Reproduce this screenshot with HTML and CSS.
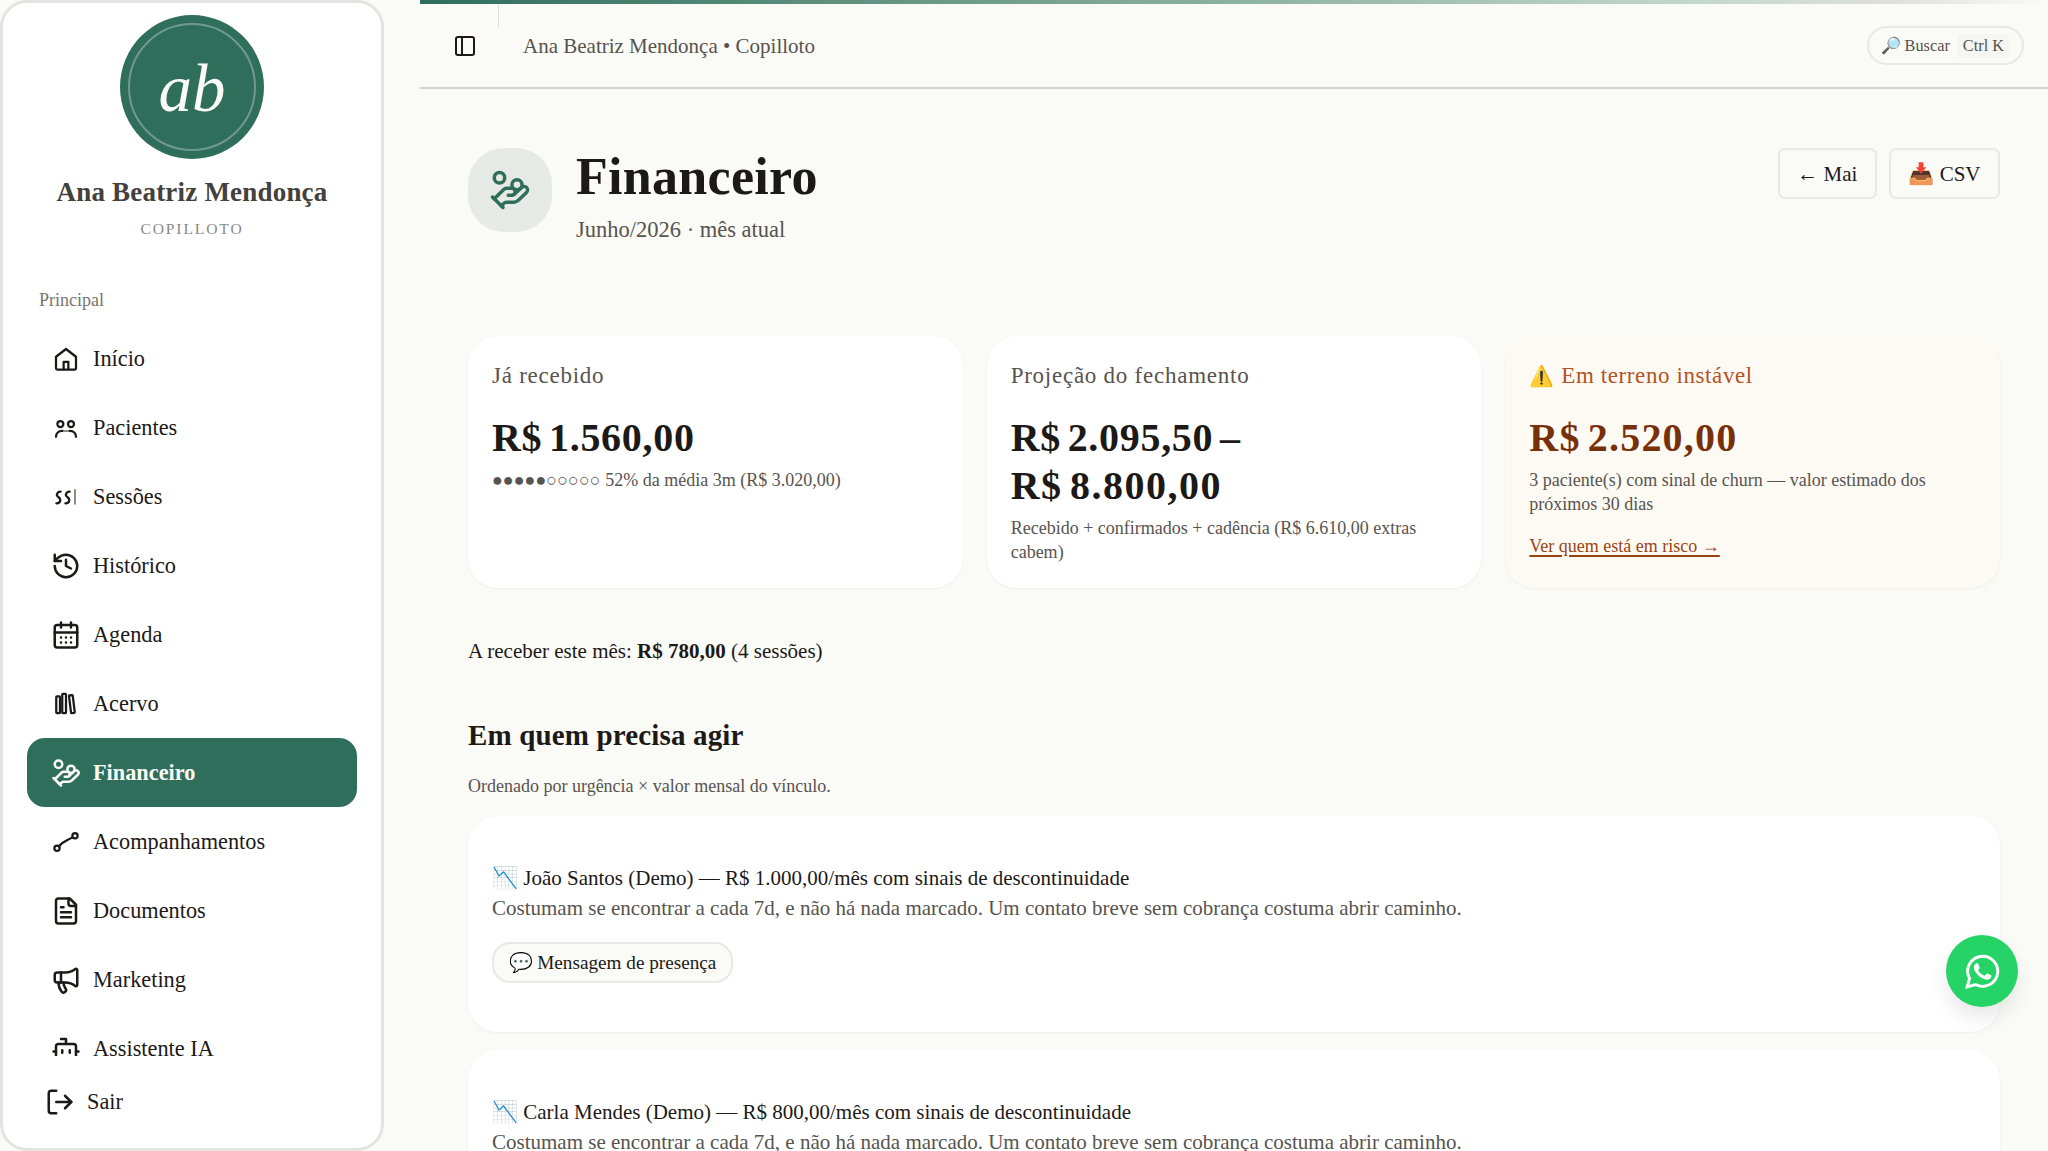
FILE: index.html
```
<!DOCTYPE html>
<html lang="pt-BR">
<head>
	<meta charset="utf-8">
	<title>Financeiro</title>
	<link rel="stylesheet" href="styles.css">
</head>
<body>
	<aside class="sidebar">
		<div class="logo"><div class="logo-ring">ab</div></div>
		<div class="brand">Ana Beatriz Mendonça</div>
		<div class="brand-sub">COPILLOTO</div>

		<div class="group-label">Principal</div>
		<nav class="nav">
			<a class="nav-item">
				<svg class="icon thin" viewBox="0 0 24 24"><path d="M4 10.2 12 4l8 6.2v9.2a1 1 0 0 1-1 1H5a1 1 0 0 1-1-1z"/><path d="M10.1 20.2v-6h3.8v6"/></svg>
				Início
			</a>
			<a class="nav-item">
				<svg class="icon thin" viewBox="0 0 24 24"><circle cx="7.5" cy="8.8" r="2.4"/><circle cx="16" cy="8.8" r="2.4"/><path d="M4 19c0-2.700 2-4.600 5-4.700M20 19c0-2.700-2-4.600-5-4.700"/><path class="faded" d="M9 14.300h6"/></svg>
				Pacientes
			</a>
			<a class="nav-item">
				<svg class="icon thin" viewBox="0 0 24 24"><path d="M7.700 7.700C5 7.700 3.800 10.200 5.600 11.800 7.800 13.100 8.600 17 4.300 17"/><path d="M14.900 7.700c-2.700 0-3.900 2.500-2.100 4.100 2.200 1.300 3 5.200-1.300 5.200"/><path class="faded" d="M19.200 6.300v11"/></svg>
				Sessões
			</a>
			<a class="nav-item">
				<svg class="icon" viewBox="0 0 24 24"><path d="M3 12a9 9 0 1 0 9-9 9.750 9.750 0 0 0-6.740 2.740L3 8"/><path d="M3 3v5h5"/><path d="M12 7v5l4 2"/></svg>
				Histórico
			</a>
			<a class="nav-item">
				<svg class="icon" viewBox="0 0 24 24"><path d="M8 2v4M16 2v4"/><rect x="3" y="4" width="18" height="18" rx="2"/><path d="M3 10h18"/><path d="M8 14h.01M12 14h.01M16 14h.01M8 18h.01M12 18h.01M16 18h.01"/></svg>
				Agenda
			</a>
			<a class="nav-item">
				<svg class="icon thin" viewBox="0 0 24 24"><rect x="4.200" y="5.800" width="3" height="13.400" rx=".5"/><rect x="9" y="3.800" width="3" height="15.400" rx=".5"/><rect x="15.200" y="5" width="3" height="14.200" rx=".5" transform="rotate(-7 16.700 12)"/></svg>
				Acervo
			</a>
			<a class="nav-item active">
				<svg class="icon" viewBox="0 0 24 24"><path d="M11 15h2a2 2 0 1 0 0-4h-3c-.6 0-1.100.2-1.400.6L3 17"/><path d="m7 21 1.600-1.400c.3-.4.8-.6 1.400-.6h4c1.100 0 2.100-.4 2.800-1.200l4.600-4.400a2 2 0 0 0-2.750-2.910l-4.200 3.900"/><path d="m2 16 6 6"/><circle cx="16" cy="9" r="2.900"/><circle cx="6" cy="5" r="3"/></svg>
				Financeiro
			</a>
			<a class="nav-item">
				<svg class="icon thin" viewBox="0 0 24 24"><circle cx="4.800" cy="16.900" r="2.100"/><circle cx="19.200" cy="6.900" r="2.100"/><path d="M6.400 15.400C9.500 11.400 13.500 10.600 17.300 8.100"/></svg>
				Acompanhamentos
			</a>
			<a class="nav-item">
				<svg class="icon" viewBox="0 0 24 24"><path d="M15 2H6a2 2 0 0 0-2 2v16a2 2 0 0 0 2 2h12a2 2 0 0 0 2-2V7Z"/><path d="M14 2v4a2 2 0 0 0 2 2h4"/><path d="M10 9H8M16 13H8M16 17H8"/></svg>
				Documentos
			</a>
			<a class="nav-item">
				<svg class="icon" viewBox="0 0 24 24"><path d="M11 6a13 13 0 0 0 8.400-2.800A1 1 0 0 1 21 4v12a1 1 0 0 1-1.600.8A13 13 0 0 0 11 14H5a2 2 0 0 1-2-2V8a2 2 0 0 1 2-2z"/><path d="M6 14a12 12 0 0 0 2.400 7.200 2 2 0 0 0 3.200-2.400A8 8 0 0 1 10 14"/><path d="M8 6v8"/></svg>
				Marketing
			</a>
			<a class="nav-item">
				<svg class="icon" viewBox="0 0 24 24"><path d="M12 8V4H8"/><rect x="4" y="8" width="16" height="12" rx="2"/><path d="M2 14h2M20 14h2M15 13v2M9 13v2"/></svg>
				Assistente IA
			</a>
		</nav>
		<a class="logout">
			<svg class="icon" viewBox="0 0 24 24"><path d="M9 21H5a2 2 0 0 1-2-2V5a2 2 0 0 1 2-2h4"/><path d="m16 17 5-5-5-5"/><path d="M21 12H9"/></svg>
			Sair
		</a>
	</aside>

	<main class="main">
		<div class="topbar-line"></div>
		<header class="topbar">
			<svg class="icon toggle" viewBox="0 0 24 24"><rect x="3" y="3" width="18" height="18" rx="2"/><path d="M9 3v18"/></svg>
			<span class="separator"></span>
			<span class="crumb">Ana Beatriz Mendonça • Copilloto</span>
			<button class="search">🔎 Buscar <kbd>Ctrl K</kbd></button>
		</header>

		<div class="content">
			<section class="hero">
				<div class="hero-icon">
					<svg class="icon" viewBox="0 0 24 24"><path d="M11 15h2a2 2 0 1 0 0-4h-3c-.6 0-1.100.2-1.400.6L3 17"/><path d="m7 21 1.600-1.400c.3-.4.8-.6 1.400-.6h4c1.100 0 2.100-.4 2.800-1.200l4.600-4.400a2 2 0 0 0-2.750-2.910l-4.200 3.900"/><path d="m2 16 6 6"/><circle cx="16" cy="9" r="2.900"/><circle cx="6" cy="5" r="3"/></svg>
				</div>
				<div class="hero-text">
					<h1>Financeiro</h1>
					<p>Junho/2026 · mês atual</p>
				</div>
				<div class="actions">
					<a class="btn">← Mai</a>
					<a class="btn">📥 CSV</a>
				</div>
			</section>

			<section class="cards">
				<div class="card">
					<h3>Já recebido</h3>
					<div class="value">R$ 1.560,00</div>
					<p class="note">●●●●●○○○○○ 52% da média 3m (R$ 3.020,00)</p>
				</div>
				<div class="card">
					<h3>Projeção do fechamento</h3>
					<div class="value">R$ 2.095,50 –<br><span class="upper">R$ 8.800,00</span></div>
					<p class="note">Recebido + confirmados + cadência (R$ 6.610,00 extras cabem)</p>
				</div>
				<div class="card warn">
					<h3><span class="alert">⚠️</span> Em terreno instável</h3>
					<div class="value">R$ 2.520,00</div>
					<p class="note">3 paciente(s) com sinal de churn — valor estimado dos próximos 30 dias</p>
					<a class="risk">Ver quem está em risco →</a>
				</div>
			</section>

			<p class="due">A receber este mês: <b>R$ 780,00</b> (4 sessões)</p>

			<h2>Em quem precisa agir</h2>
			<p class="hint">Ordenado por urgência × valor mensal do vínculo.</p>

			<div class="person">
				<div>📉 João Santos (Demo) — R$ 1.000,00/mês com sinais de descontinuidade</div>
				<div class="muted">Costumam se encontrar a cada 7d, e não há nada marcado. Um contato breve sem cobrança costuma abrir caminho.</div>
				<button class="message">💬 Mensagem de presença</button>
			</div>
			<div class="person">
				<div>📉 Carla Mendes (Demo) — R$ 800,00/mês com sinais de descontinuidade</div>
				<div class="muted">Costumam se encontrar a cada 7d, e não há nada marcado. Um contato breve sem cobrança costuma abrir caminho.</div>
			</div>
		</div>
	</main>

	<a class="whatsapp">
		<svg viewBox="0 0 24 24"><path d="M17.472 14.382c-.297-.149-1.758-.867-2.030-.967-.273-.099-.471-.148-.670.150-.197.297-.767.966-.940 1.164-.173.199-.347.223-.644.075-.297-.150-1.255-.463-2.390-1.475-.883-.788-1.480-1.761-1.653-2.059-.173-.297-.018-.458.130-.606.134-.133.298-.347.446-.520.149-.174.198-.298.298-.497.099-.198.050-.371-.025-.520-.075-.149-.669-1.612-.916-2.207-.242-.579-.487-.500-.669-.510-.173-.008-.371-.010-.570-.010-.198 0-.520.074-.792.372-.272.297-1.040 1.016-1.040 2.479 0 1.462 1.065 2.875 1.213 3.074.149.198 2.096 3.200 5.077 4.487.709.306 1.262.489 1.694.625.712.227 1.360.195 1.871.118.571-.085 1.758-.719 2.006-1.413.248-.694.248-1.289.173-1.413-.074-.124-.272-.198-.570-.347"/><path class="ring" d="M1.500 22.500l1.600-5.700A10.300 10.300 0 1 1 7.200 20.900z"/></svg>
	</a>
</body>
</html>
```
FILE: styles.css
```
* {
	box-sizing: border-box;
}

body {
	margin: 0;
	height: 100vh;
	overflow: hidden;
	display: flex;
	gap: 36px;
	background: #fafaf6;
	color: #1c1917;
	font-family: "Liberation Serif", serif;
	font-size: 21px;
	line-height: 30px;
}

h1, h2, h3, p {
	margin: 0;
}

button {
	font-family: inherit;
}

.icon {
	width: 30px;
	height: 30px;
	flex: none;
	fill: none;
	stroke: currentColor;
	stroke-width: 2;
	stroke-linecap: round;
	stroke-linejoin: round;
}

.thin {
	stroke-width: 1.8;
}

.faded {
	opacity: .5;
	stroke-width: 1.6;
}

/* sidebar */
.sidebar {
	width: 384px;
	height: 100vh;
	flex: none;
	display: flex;
	flex-direction: column;
	padding: 12px 24px 22px;
	background: #fff;
	border: 3px solid #e3e3df;
	border-radius: 27px;
}

.logo {
	width: 144px;
	height: 144px;
	flex: none;
	padding: 8px;
	align-self: center;
	border-radius: 50%;
	background: #2f6e5a;
}

.logo-ring {
	height: 128px;
	border: 2px solid #6f9a8c;
	border-radius: 50%;
	color: #fafaf6;
	font-size: 67px;
	font-style: italic;
	line-height: 126px;
	text-align: center;
}

.brand {
	margin-top: 17px;
	color: #44403c;
	font-size: 27px;
	font-weight: bold;
	line-height: 33px;
	letter-spacing: .2px;
	text-align: center;
}

.brand-sub {
	margin-top: 10px;
	color: #8b8986;
	font-size: 15.6px;
	line-height: 20px;
	letter-spacing: .12em;
	text-align: center;
}

.group-label {
	margin: 49px 0 12px 12px;
	color: #78756f;
	font-size: 18px;
	line-height: 24px;
}

.nav {
	flex: 1;
	min-height: 0;
	overflow: hidden;
}

.nav-item {
	display: flex;
	align-items: center;
	gap: 12px;
	height: 69px;
	padding-left: 24px;
	border-radius: 18px;
	font-size: 22.300px;
}

.active {
	background: #2f6e5a;
	color: #fafaf6;
	font-weight: bold;
}

.logout {
	display: flex;
	align-items: center;
	gap: 12px;
	height: 48px;
	margin-top: 22px;
	padding-left: 18px;
	font-size: 22.300px;
}

/* top bar */
.main {
	flex: 1;
	min-width: 0;
}

.topbar-line {
	height: 4px;
	background: linear-gradient(90deg, #2f6e5a 0%, #c5d9d1 80%, #deded9 90%, #fafaf6 100%);
}

.topbar {
	display: flex;
	align-items: center;
	height: 85px;
	padding: 0 24px 0 33px;
	border-bottom: 2px solid #ccd5d1;
}

.toggle {
	width: 24px;
	height: 24px;
}

.separator {
	align-self: flex-start;
	width: 1px;
	height: 24px;
	margin: 0 24px 0 21px;
	background: #dededa;
}

.crumb {
	color: #57534e;
}

.search {
	margin-left: auto;
	height: 39px;
	padding: 0 12px;
	display: flex;
	align-items: center;
	gap: 7px;
	background: #fafaf6;
	border: 2px solid #e8e8e4;
	border-radius: 20px;
	color: #57534e;
	font-size: 16.300px;
}

.search kbd {
	padding: 0 6px;
	line-height: 24px;
	border-radius: 6px;
	background: #f5f5f2;
	font-family: inherit;
	font-size: 16.300px;
}

/* page */
.content {
	padding: 59px 48px 0;
}

.hero {
	display: flex;
	align-items: flex-start;
	gap: 24px;
	height: 98px;
	margin-bottom: 90px;
}

.hero-icon {
	display: flex;
	align-items: center;
	justify-content: center;
	width: 84px;
	height: 84px;
	border-radius: 36px;
	background: #e6eae6;
	color: #2f6e5a;
}

.hero-icon .icon {
	width: 42px;
	height: 42px;
}

.hero-text h1 {
	margin: -1px 0 6px;
	font-size: 52px;
	line-height: 60px;
	letter-spacing: .3px;
}

.hero-text p {
	color: #57534e;
	font-size: 22.500px;
	line-height: 34px;
}

.actions {
	display: flex;
	gap: 12px;
	margin-left: auto;
}

.btn {
	display: flex;
	align-items: center;
	height: 51px;
	padding: 0 17.500px;
	border: 2px solid #e8e8e4;
	border-radius: 7px;
}

.cards {
	display: grid;
	grid-template-columns: repeat(3, 1fr);
	gap: 24px;
}

.card {
	min-height: 252px;
	padding: 24px;
	border-radius: 30px;
	background: #fff;
	box-shadow: 0 1px 3px rgba(28, 25, 23, .05);
}

.card h3 {
	padding-top: 1px;
	color: #57534e;
	font-size: 23px;
	font-weight: normal;
	line-height: 30px;
	letter-spacing: .75px;
}

.value {
	margin: 23px 0 6px;
	font-size: 40px;
	font-weight: bold;
	line-height: 48px;
	letter-spacing: .7px;
	word-spacing: -4px;
}

.upper {
	letter-spacing: 1.500px;
}

.note {
	color: #57534e;
	font-size: 18px;
	line-height: 24px;
}

.warn {
	background: #fdfaf4;
}

.warn h3 {
	color: #b45322;
	letter-spacing: .6px;
}

.alert {
	font-size: 20px;
}

.warn .value {
	color: #78300a;
	letter-spacing: 1.200px;
}

.risk {
	display: inline-block;
	margin-top: 18px;
	color: #9a4412;
	font-size: 18px;
	line-height: 24px;
	text-decoration: underline;
	text-decoration-thickness: 1.500px;
	text-underline-offset: 3px;
}

.due {
	margin-top: 48px;
}

h2 {
	margin: 51px 0 21px;
	font-size: 29px;
	line-height: 36px;
	letter-spacing: .15px;
}

.hint {
	margin-bottom: 18px;
	color: #57534e;
	font-size: 18px;
	line-height: 24px;
}

.person {
	height: 216px;
	margin-bottom: 18px;
	padding: 47px 24px;
	border-radius: 30px;
	background: #fff;
	box-shadow: 0 1px 3px rgba(28, 25, 23, .05);
}

.muted {
	color: #57534e;
}

.message {
	display: flex;
	align-items: center;
	height: 41px;
	margin-top: 19px;
	padding: 0 14.500px;
	border: 2px solid #e8e8e4;
	border-radius: 18px;
	background: #fafaf6;
	color: #1c1917;
	font-size: 19.200px;
}

/* floating contact button */
.whatsapp {
	position: absolute;
	right: 30px;
	bottom: 144px;
	display: flex;
	align-items: center;
	justify-content: center;
	width: 72px;
	height: 72px;
	border-radius: 50%;
	background: #25d366;
	box-shadow: 0 12px 24px -4px rgba(0, 0, 0, .12);
}

.whatsapp svg {
	width: 35px;
	height: 35px;
	fill: #fff;
}

.whatsapp .ring {
	fill: none;
	stroke: #fff;
	stroke-width: 2;
}
```
